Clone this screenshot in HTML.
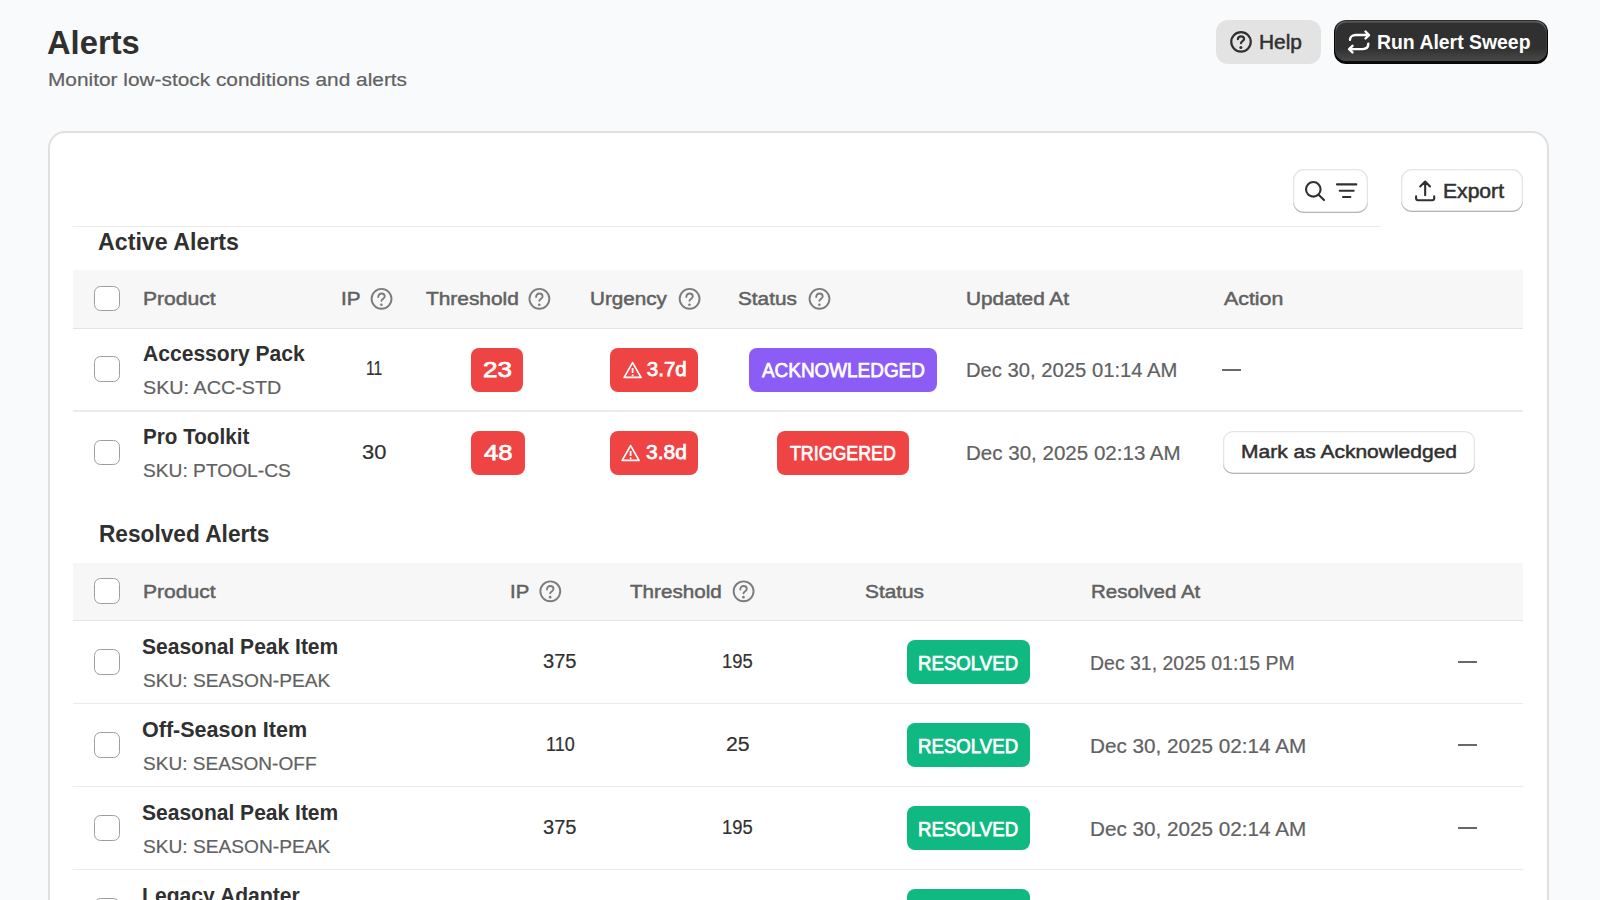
<!DOCTYPE html>
<html><head><meta charset="utf-8">
<style>
html,body{margin:0;padding:0;}
body{width:1600px;height:900px;overflow:hidden;background:#f9fafb;position:relative;font-family:"Liberation Sans",sans-serif;}
.t{position:absolute;white-space:nowrap;transform-origin:0 0;}
.b{display:inline-block;width:0;height:0;vertical-align:baseline;}
.abs{position:absolute;box-sizing:border-box;}
.card{left:47.8px;top:130.5px;width:1501.5px;height:900px;background:#fff;border:2px solid #e0e0e0;border-radius:17px;}
.btn-help{left:1215.5px;top:19.7px;width:105.5px;height:44.3px;background:#e3e3e3;border-radius:12px;}
.btn-primary{left:1333.5px;top:19.75px;width:214.8px;height:44px;border-radius:12px;background:linear-gradient(180deg,rgba(48,48,48,0) 63.5%,rgba(255,255,255,0.15) 100%),#303030;box-shadow:inset 0 -1.6px 0 1.3px rgba(0,0,0,0.85), inset 0 0 0 1.3px #303030, inset 0 0.7px 0 1.9px rgba(255,255,255,0.25);}
.btn-sec{background:#fff;border-radius:11px;box-shadow:inset 0 -1.3px 0 0 #b5b5b5, inset 0 0 0 1.3px rgba(0,0,0,0.1), inset 0 0.7px 0 1.9px #fff;}
.thead{left:73px;width:1450px;height:57px;background:#f7f7f7;border-bottom:1.6px solid #e3e3e3;}
.rowline{left:73px;width:1450px;height:1.5px;background:#ebebeb;}
.cb{width:25.8px;height:25.8px;border:1.8px solid #9e9e9e;border-radius:6.5px;background:#fff;}
.badge{height:44px;border-radius:8px;}
.red{background:#ef4444;}
.violet{background:#8b5cf6;}
.green{background:#10b981;}
.dash{height:2px;background:#686868;}
</style></head><body>
<!-- header buttons -->
<div class="abs btn-help"></div>
<svg class="abs" style="left:1229px;top:30px" width="24" height="24" viewBox="0 0 24 24"><circle cx="12" cy="11.85" r="9.75" fill="none" stroke="#303030" stroke-width="2.2"/><path d="M8.9 9.2C8.9 7.4 10.3 6.3 12 6.3C13.8 6.3 15.1 7.5 15.1 9C15.1 11 12 11.4 12 13.2" fill="none" stroke="#303030" stroke-width="2.2" stroke-linecap="round"/><circle cx="11.85" cy="17.5" r="1.5" fill="#303030"/></svg>
<div class="abs btn-primary"></div>
<svg class="abs" style="left:1342px;top:26px" width="34" height="32" viewBox="0 0 34 32"><path d="M8 13.7C8 11 10.3 9.05 13.8 9.05H26.8M23.5 5.5L27 9.05L23.5 12.5M26.3 17.8C26.3 20.9 24.2 23.1 20.6 23.1H7.2M10.5 19.8L7.1 23.1L10.5 26.4" fill="none" stroke="#fff" stroke-width="2.4" stroke-linecap="round" stroke-linejoin="round"/></svg>
<!-- card -->
<div class="abs card"></div>
<div class="abs btn-sec" style="left:1293.2px;top:168.9px;width:75.2px;height:43.7px;"></div>
<svg class="abs" style="left:1300px;top:176px" width="64" height="30" viewBox="0 0 64 30"><circle cx="13.3" cy="13.3" r="7.3" fill="none" stroke="#303030" stroke-width="2.1"/><path d="M18.6 18.7L24 24.1" stroke="#303030" stroke-width="2.1" stroke-linecap="round"/><path d="M37 8.4H56.3M39.7 14.8H53.7M43 21H50.4" stroke="#303030" stroke-width="2.1" stroke-linecap="round"/></svg>
<div class="abs btn-sec" style="left:1400.6px;top:169.3px;width:122px;height:43px;"></div>
<svg class="abs" style="left:1410px;top:176px" width="30" height="30" viewBox="0 0 30 30"><path d="M15.17 19.3V5.6M10.2 10.5L15.17 5.5L20 10.5M6.1 20.4V22.2Q6.1 24.2 8.1 24.2H22.2Q24.2 24.2 24.2 22.2V20.4" fill="none" stroke="#303030" stroke-width="2.1" stroke-linecap="round" stroke-linejoin="round"/></svg>
<div class="abs" style="left:73px;top:225.5px;width:1308px;height:1.6px;background:#ebebeb"></div>
<!-- active table -->
<div class="abs thead" style="top:270.4px;height:58.4px"></div>
<div class="abs cb" style="left:93.9px;top:285.7px"></div>
<svg class="abs" style="left:370px;top:287px" width="23" height="23" viewBox="0 0 23 23"><g transform="translate(0.55,0.85)"><circle cx="11" cy="11" r="9.95" fill="none" stroke="#7c7c7c" stroke-width="1.9"/><path d="M7.7 9.2C7.7 7.1 9.2 5.65 10.95 5.65C12.8 5.65 14.2 7 14.2 8.7C14.2 10.8 10.9 11.3 10.9 12.9" fill="none" stroke="#7c7c7c" stroke-width="1.9" stroke-linecap="round"/><circle cx="10.85" cy="16.85" r="1.3" fill="#7c7c7c"/></g></svg><svg class="abs" style="left:528px;top:287px" width="23" height="23" viewBox="0 0 23 23"><g transform="translate(0.40,0.85)"><circle cx="11" cy="11" r="9.95" fill="none" stroke="#7c7c7c" stroke-width="1.9"/><path d="M7.7 9.2C7.7 7.1 9.2 5.65 10.95 5.65C12.8 5.65 14.2 7 14.2 8.7C14.2 10.8 10.9 11.3 10.9 12.9" fill="none" stroke="#7c7c7c" stroke-width="1.9" stroke-linecap="round"/><circle cx="10.85" cy="16.85" r="1.3" fill="#7c7c7c"/></g></svg><svg class="abs" style="left:678px;top:287px" width="23" height="23" viewBox="0 0 23 23"><g transform="translate(0.60,0.85)"><circle cx="11" cy="11" r="9.95" fill="none" stroke="#7c7c7c" stroke-width="1.9"/><path d="M7.7 9.2C7.7 7.1 9.2 5.65 10.95 5.65C12.8 5.65 14.2 7 14.2 8.7C14.2 10.8 10.9 11.3 10.9 12.9" fill="none" stroke="#7c7c7c" stroke-width="1.9" stroke-linecap="round"/><circle cx="10.85" cy="16.85" r="1.3" fill="#7c7c7c"/></g></svg><svg class="abs" style="left:808px;top:287px" width="23" height="23" viewBox="0 0 23 23"><g transform="translate(0.50,0.85)"><circle cx="11" cy="11" r="9.95" fill="none" stroke="#7c7c7c" stroke-width="1.9"/><path d="M7.7 9.2C7.7 7.1 9.2 5.65 10.95 5.65C12.8 5.65 14.2 7 14.2 8.7C14.2 10.8 10.9 11.3 10.9 12.9" fill="none" stroke="#7c7c7c" stroke-width="1.9" stroke-linecap="round"/><circle cx="10.85" cy="16.85" r="1.3" fill="#7c7c7c"/></g></svg>
<div class="abs cb" style="left:94px;top:356.20px"></div><div class="abs badge red" style="left:470.8px;top:347.60px;width:52.50px"></div><div class="abs badge red" style="left:610.2px;top:347.60px;width:88.00px"></div><svg class="abs" style="left:622.90px;top:360.70px" width="20" height="18" viewBox="0 0 20 18"><path d="M9.6 1.6L18 16.4H1.2Z" fill="none" stroke="#fff" stroke-width="1.7" stroke-linejoin="round"/><path d="M9.6 7V12" stroke="#fff" stroke-width="1.8"/><circle cx="9.6" cy="14.2" r="0.95" fill="#fff"/></svg><div class="abs badge violet" style="left:749.4px;top:347.60px;width:187.60px"></div><div class="abs rowline" style="top:410.10px"></div><div class="abs dash" style="left:1222px;top:368.50px;width:19px"></div><div class="abs cb" style="left:94px;top:439.50px"></div><div class="abs badge red" style="left:471px;top:430.90px;width:53.60px"></div><div class="abs badge red" style="left:609.75px;top:430.90px;width:88.65px"></div><svg class="abs" style="left:621.40px;top:444.00px" width="20" height="18" viewBox="0 0 20 18"><path d="M9.6 1.6L18 16.4H1.2Z" fill="none" stroke="#fff" stroke-width="1.7" stroke-linejoin="round"/><path d="M9.6 7V12" stroke="#fff" stroke-width="1.8"/><circle cx="9.6" cy="14.2" r="0.95" fill="#fff"/></svg><div class="abs badge red" style="left:776.8px;top:430.90px;width:132.20px"></div><div class="abs btn-sec" style="left:1223.1px;top:431px;width:251.5px;height:43px;border-radius:10px"></div>
<!-- resolved -->
<div class="abs thead" style="top:563px;height:57.8px"></div>
<div class="abs cb" style="left:94px;top:578.3px"></div>
<svg class="abs" style="left:539px;top:580px" width="23" height="23" viewBox="0 0 23 23"><g transform="translate(0.30,0.30)"><circle cx="11" cy="11" r="9.95" fill="none" stroke="#7c7c7c" stroke-width="1.9"/><path d="M7.7 9.2C7.7 7.1 9.2 5.65 10.95 5.65C12.8 5.65 14.2 7 14.2 8.7C14.2 10.8 10.9 11.3 10.9 12.9" fill="none" stroke="#7c7c7c" stroke-width="1.9" stroke-linecap="round"/><circle cx="10.85" cy="16.85" r="1.3" fill="#7c7c7c"/></g></svg><svg class="abs" style="left:732px;top:580px" width="23" height="23" viewBox="0 0 23 23"><g transform="translate(0.60,0.30)"><circle cx="11" cy="11" r="9.95" fill="none" stroke="#7c7c7c" stroke-width="1.9"/><path d="M7.7 9.2C7.7 7.1 9.2 5.65 10.95 5.65C12.8 5.65 14.2 7 14.2 8.7C14.2 10.8 10.9 11.3 10.9 12.9" fill="none" stroke="#7c7c7c" stroke-width="1.9" stroke-linecap="round"/><circle cx="10.85" cy="16.85" r="1.3" fill="#7c7c7c"/></g></svg>
<div class="abs cb" style="left:94px;top:649.00px"></div><div class="abs badge green" style="left:906.6px;top:640.10px;width:123.4px"></div><div class="abs dash" style="left:1458px;top:661.10px;width:18.8px"></div><div class="abs rowline" style="top:702.50px"></div><div class="abs cb" style="left:94px;top:732.20px"></div><div class="abs badge green" style="left:906.6px;top:723.30px;width:123.4px"></div><div class="abs dash" style="left:1458px;top:744.30px;width:18.8px"></div><div class="abs rowline" style="top:785.70px"></div><div class="abs cb" style="left:94px;top:815.30px"></div><div class="abs badge green" style="left:906.6px;top:806.40px;width:123.4px"></div><div class="abs dash" style="left:1458px;top:827.40px;width:18.8px"></div><div class="abs rowline" style="top:868.80px"></div><div class="abs cb" style="left:94px;top:898.30px"></div><div class="abs badge green" style="left:906.6px;top:889.40px;width:123.4px"></div><div class="abs dash" style="left:1458px;top:910.40px;width:18.8px"></div>
<div class="t" style="left:47.43px;top:26.20px;font-size:33.58px;line-height:33.58px;font-weight:700;color:#303030;transform:scaleX(0.9742);">Alerts<span class="b"></span></div>
<div class="t" style="left:47.80px;top:71.30px;font-size:18.9px;line-height:18.9px;font-weight:400;color:#616161;transform:scaleX(1.1031);-webkit-text-stroke:0.2px currentColor;">Monitor low-stock conditions and alerts<span class="b"></span></div>
<div class="t" style="left:1259.37px;top:32.50px;font-size:19.62px;line-height:19.62px;font-weight:400;color:#303030;transform:scaleX(1.0658);-webkit-text-stroke:0.5px currentColor;">Help<span class="b"></span></div>
<div class="t" style="left:1377.05px;top:31.70px;font-size:20.35px;line-height:20.35px;font-weight:700;color:#ffffff;transform:scaleX(0.9541);">Run Alert Sweep<span class="b"></span></div>
<div class="t" style="left:1443.35px;top:181.70px;font-size:19.62px;line-height:19.62px;font-weight:400;color:#303030;transform:scaleX(1.0764);-webkit-text-stroke:0.5px currentColor;">Export<span class="b"></span></div>
<div class="t" style="left:98.30px;top:231.30px;font-size:23.26px;line-height:23.26px;font-weight:700;color:#303030;transform:scaleX(0.9978);">Active Alerts<span class="b"></span></div>
<div class="t" style="left:142.70px;top:289.20px;font-size:19.19px;line-height:19.19px;font-weight:400;color:#616161;transform:scaleX(1.0985);-webkit-text-stroke:0.5px currentColor;">Product<span class="b"></span></div>
<div class="t" style="left:341.34px;top:289.20px;font-size:19.19px;line-height:19.19px;font-weight:400;color:#616161;transform:scaleX(1.0800);-webkit-text-stroke:0.5px currentColor;">IP<span class="b"></span></div>
<div class="t" style="left:425.80px;top:289.20px;font-size:19.19px;line-height:19.19px;font-weight:400;color:#616161;transform:scaleX(1.0881);-webkit-text-stroke:0.5px currentColor;">Threshold<span class="b"></span></div>
<div class="t" style="left:590.12px;top:289.20px;font-size:19.19px;line-height:19.19px;font-weight:400;color:#616161;transform:scaleX(1.0757);-webkit-text-stroke:0.5px currentColor;">Urgency<span class="b"></span></div>
<div class="t" style="left:738.12px;top:289.20px;font-size:19.19px;line-height:19.19px;font-weight:400;color:#616161;transform:scaleX(1.0811);-webkit-text-stroke:0.5px currentColor;">Status<span class="b"></span></div>
<div class="t" style="left:966.41px;top:289.20px;font-size:19.19px;line-height:19.19px;font-weight:400;color:#616161;transform:scaleX(1.0851);-webkit-text-stroke:0.5px currentColor;">Updated At<span class="b"></span></div>
<div class="t" style="left:1223.50px;top:289.20px;font-size:19.19px;line-height:19.19px;font-weight:400;color:#616161;transform:scaleX(1.1135);-webkit-text-stroke:0.5px currentColor;">Action<span class="b"></span></div>
<div class="t" style="left:142.52px;top:344.00px;font-size:21.44px;line-height:21.44px;font-weight:700;color:#303030;transform:scaleX(0.9831);">Accessory Pack<span class="b"></span></div>
<div class="t" style="left:142.95px;top:379.00px;font-size:18.9px;line-height:18.9px;font-weight:400;color:#616161;transform:scaleX(1.0454);-webkit-text-stroke:0.2px currentColor;">SKU: ACC-STD<span class="b"></span></div>
<div class="t" style="left:366.39px;top:359.20px;font-size:19.33px;line-height:19.33px;font-weight:400;color:#303030;transform:scaleX(0.8111);-webkit-text-stroke:0.2px currentColor;">11<span class="b"></span></div>
<div class="t" style="left:482.83px;top:359.10px;font-size:22.38px;line-height:22.38px;font-weight:400;color:#ffffff;transform:scaleX(1.1652);-webkit-text-stroke:0.75px currentColor;">23<span class="b"></span></div>
<div class="t" style="left:646.70px;top:358.50px;font-size:20.64px;line-height:20.64px;font-weight:400;color:#ffffff;transform:scaleX(1.0000);-webkit-text-stroke:0.75px currentColor;">3.7d<span class="b"></span></div>
<div class="t" style="left:762.20px;top:360.10px;font-size:20.93px;line-height:20.93px;font-weight:400;color:#ffffff;transform:scaleX(0.9039);-webkit-text-stroke:0.75px currentColor;">ACKNOWLEDGED<span class="b"></span></div>
<div class="t" style="left:965.69px;top:360.70px;font-size:19.62px;line-height:19.62px;font-weight:400;color:#616161;transform:scaleX(1.0316);-webkit-text-stroke:0.2px currentColor;">Dec 30, 2025 01:14 AM<span class="b"></span></div>
<div class="t" style="left:142.54px;top:427.30px;font-size:21.44px;line-height:21.44px;font-weight:700;color:#303030;transform:scaleX(0.9633);">Pro Toolkit<span class="b"></span></div>
<div class="t" style="left:142.98px;top:462.30px;font-size:18.9px;line-height:18.9px;font-weight:400;color:#616161;transform:scaleX(1.0156);-webkit-text-stroke:0.2px currentColor;">SKU: PTOOL-CS<span class="b"></span></div>
<div class="t" style="left:361.97px;top:442.50px;font-size:19.33px;line-height:19.33px;font-weight:400;color:#303030;transform:scaleX(1.1300);-webkit-text-stroke:0.2px currentColor;">30<span class="b"></span></div>
<div class="t" style="left:483.90px;top:442.40px;font-size:22.38px;line-height:22.38px;font-weight:400;color:#ffffff;transform:scaleX(1.1458);-webkit-text-stroke:0.75px currentColor;">48<span class="b"></span></div>
<div class="t" style="left:646.23px;top:441.80px;font-size:20.64px;line-height:20.64px;font-weight:400;color:#ffffff;transform:scaleX(1.0171);-webkit-text-stroke:0.75px currentColor;">3.8d<span class="b"></span></div>
<div class="t" style="left:790.30px;top:443.40px;font-size:20.93px;line-height:20.93px;font-weight:400;color:#ffffff;transform:scaleX(0.8508);-webkit-text-stroke:0.75px currentColor;">TRIGGERED<span class="b"></span></div>
<div class="t" style="left:965.65px;top:444.00px;font-size:19.62px;line-height:19.62px;font-weight:400;color:#616161;transform:scaleX(1.0475);-webkit-text-stroke:0.2px currentColor;">Dec 30, 2025 02:13 AM<span class="b"></span></div>
<div class="t" style="left:1241.31px;top:442.20px;font-size:19.19px;line-height:19.19px;font-weight:400;color:#303030;transform:scaleX(1.0949);-webkit-text-stroke:0.5px currentColor;">Mark as Acknowledged<span class="b"></span></div>
<div class="t" style="left:98.62px;top:523.30px;font-size:23.11px;line-height:23.11px;font-weight:700;color:#303030;transform:scaleX(0.9808);">Resolved Alerts<span class="b"></span></div>
<div class="t" style="left:142.70px;top:582.20px;font-size:19.19px;line-height:19.19px;font-weight:400;color:#616161;transform:scaleX(1.0985);-webkit-text-stroke:0.5px currentColor;">Product<span class="b"></span></div>
<div class="t" style="left:509.98px;top:582.20px;font-size:19.19px;line-height:19.19px;font-weight:400;color:#616161;transform:scaleX(1.0600);-webkit-text-stroke:0.5px currentColor;">IP<span class="b"></span></div>
<div class="t" style="left:630.20px;top:582.20px;font-size:19.19px;line-height:19.19px;font-weight:400;color:#616161;transform:scaleX(1.0750);-webkit-text-stroke:0.5px currentColor;">Threshold<span class="b"></span></div>
<div class="t" style="left:865.42px;top:582.20px;font-size:19.19px;line-height:19.19px;font-weight:400;color:#616161;transform:scaleX(1.0849);-webkit-text-stroke:0.5px currentColor;">Status<span class="b"></span></div>
<div class="t" style="left:1091.13px;top:582.20px;font-size:19.19px;line-height:19.19px;font-weight:400;color:#616161;transform:scaleX(1.0673);-webkit-text-stroke:0.5px currentColor;">Resolved At<span class="b"></span></div>
<div class="t" style="left:142.32px;top:636.70px;font-size:21.44px;line-height:21.44px;font-weight:700;color:#303030;transform:scaleX(0.9803);">Seasonal Peak Item<span class="b"></span></div>
<div class="t" style="left:142.79px;top:671.70px;font-size:18.9px;line-height:18.9px;font-weight:400;color:#616161;transform:scaleX(1.0137);-webkit-text-stroke:0.2px currentColor;">SKU: SEASON-PEAK<span class="b"></span></div>
<div class="t" style="left:543.46px;top:651.80px;font-size:19.33px;line-height:19.33px;font-weight:400;color:#303030;transform:scaleX(1.0403);-webkit-text-stroke:0.2px currentColor;">375<span class="b"></span></div>
<div class="t" style="left:722.05px;top:651.80px;font-size:19.33px;line-height:19.33px;font-weight:400;color:#303030;transform:scaleX(0.9516);-webkit-text-stroke:0.2px currentColor;">195<span class="b"></span></div>
<div class="t" style="left:917.92px;top:652.50px;font-size:20.35px;line-height:20.35px;font-weight:400;color:#ffffff;transform:scaleX(0.9165);-webkit-text-stroke:0.75px currentColor;">RESOLVED<span class="b"></span></div>
<div class="t" style="left:1089.91px;top:653.90px;font-size:19.62px;line-height:19.62px;font-weight:400;color:#616161;transform:scaleX(0.9931);-webkit-text-stroke:0.2px currentColor;">Dec 31, 2025 01:15 PM<span class="b"></span></div>
<div class="t" style="left:142.30px;top:719.90px;font-size:21.44px;line-height:21.44px;font-weight:700;color:#303030;transform:scaleX(1.0043);">Off-Season Item<span class="b"></span></div>
<div class="t" style="left:142.79px;top:754.90px;font-size:18.9px;line-height:18.9px;font-weight:400;color:#616161;transform:scaleX(1.0082);-webkit-text-stroke:0.2px currentColor;">SKU: SEASON-OFF<span class="b"></span></div>
<div class="t" style="left:546.07px;top:735.00px;font-size:19.33px;line-height:19.33px;font-weight:400;color:#303030;transform:scaleX(0.9310);-webkit-text-stroke:0.2px currentColor;">110<span class="b"></span></div>
<div class="t" style="left:725.90px;top:735.00px;font-size:19.33px;line-height:19.33px;font-weight:400;color:#303030;transform:scaleX(1.1000);-webkit-text-stroke:0.2px currentColor;">25<span class="b"></span></div>
<div class="t" style="left:917.92px;top:735.70px;font-size:20.35px;line-height:20.35px;font-weight:400;color:#ffffff;transform:scaleX(0.9165);-webkit-text-stroke:0.75px currentColor;">RESOLVED<span class="b"></span></div>
<div class="t" style="left:1089.79px;top:737.10px;font-size:19.62px;line-height:19.62px;font-weight:400;color:#616161;transform:scaleX(1.0552);-webkit-text-stroke:0.2px currentColor;">Dec 30, 2025 02:14 AM<span class="b"></span></div>
<div class="t" style="left:142.32px;top:803.00px;font-size:21.44px;line-height:21.44px;font-weight:700;color:#303030;transform:scaleX(0.9803);">Seasonal Peak Item<span class="b"></span></div>
<div class="t" style="left:142.79px;top:838.00px;font-size:18.9px;line-height:18.9px;font-weight:400;color:#616161;transform:scaleX(1.0137);-webkit-text-stroke:0.2px currentColor;">SKU: SEASON-PEAK<span class="b"></span></div>
<div class="t" style="left:543.46px;top:818.10px;font-size:19.33px;line-height:19.33px;font-weight:400;color:#303030;transform:scaleX(1.0403);-webkit-text-stroke:0.2px currentColor;">375<span class="b"></span></div>
<div class="t" style="left:722.05px;top:818.10px;font-size:19.33px;line-height:19.33px;font-weight:400;color:#303030;transform:scaleX(0.9516);-webkit-text-stroke:0.2px currentColor;">195<span class="b"></span></div>
<div class="t" style="left:917.92px;top:818.80px;font-size:20.35px;line-height:20.35px;font-weight:400;color:#ffffff;transform:scaleX(0.9165);-webkit-text-stroke:0.75px currentColor;">RESOLVED<span class="b"></span></div>
<div class="t" style="left:1089.79px;top:820.20px;font-size:19.62px;line-height:19.62px;font-weight:400;color:#616161;transform:scaleX(1.0552);-webkit-text-stroke:0.2px currentColor;">Dec 30, 2025 02:14 AM<span class="b"></span></div>
<div class="t" style="left:142.31px;top:886.00px;font-size:21.44px;line-height:21.44px;font-weight:700;color:#303030;transform:scaleX(0.9855);">Legacy Adapter<span class="b"></span></div>
<div class="t" style="left:142.81px;top:921.00px;font-size:18.9px;line-height:18.9px;font-weight:400;color:#616161;transform:scaleX(0.9923);-webkit-text-stroke:0.2px currentColor;">SKU: LEGACY-ADP<span class="b"></span></div>
<div class="t" style="left:554.39px;top:901.10px;font-size:19.33px;line-height:19.33px;font-weight:400;color:#303030;transform:scaleX(1.1111);-webkit-text-stroke:0.2px currentColor;">0<span class="b"></span></div>
<div class="t" style="left:731.39px;top:901.10px;font-size:19.33px;line-height:19.33px;font-weight:400;color:#303030;transform:scaleX(1.1111);-webkit-text-stroke:0.2px currentColor;">0<span class="b"></span></div>
<div class="t" style="left:917.92px;top:901.80px;font-size:20.35px;line-height:20.35px;font-weight:400;color:#ffffff;transform:scaleX(0.9165);-webkit-text-stroke:0.75px currentColor;">RESOLVED<span class="b"></span></div>
<div class="t" style="left:1089.79px;top:903.20px;font-size:19.62px;line-height:19.62px;font-weight:400;color:#616161;transform:scaleX(1.0552);-webkit-text-stroke:0.2px currentColor;">Dec 30, 2025 02:14 AM<span class="b"></span></div>
</body></html>
